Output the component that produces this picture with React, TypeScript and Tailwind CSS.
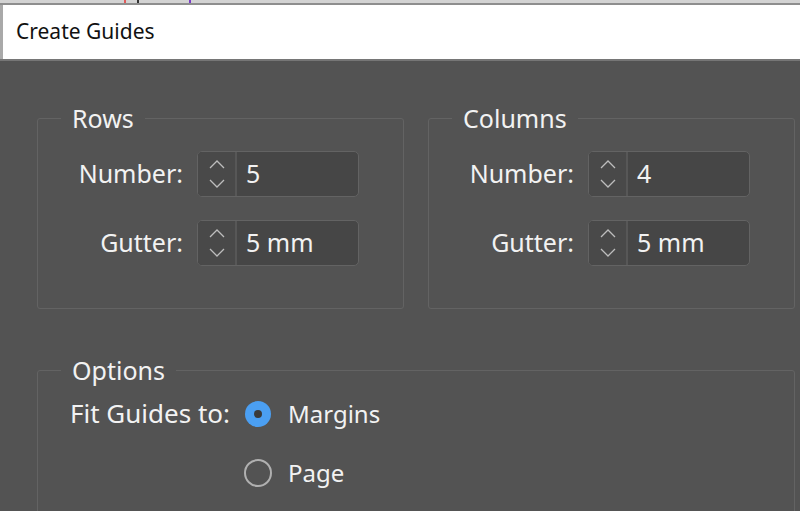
import React from "react";

const font = "font-['Noto_Sans','Open_Sans',sans-serif]";

function Chevrons() {
  return (
    <svg width="18" height="34" viewBox="0 0 18 34" fill="none">
      <path d="M2 11 L9 4 L16 11" stroke="#bdbdbd" strokeWidth="1.3" />
      <path d="M2 23 L9 30 L16 23" stroke="#bdbdbd" strokeWidth="1.3" />
    </svg>
  );
}

function Spinner({ value }: { value: string }) {
  return (
    <div className="flex h-[46px] w-[162px] rounded-[5px] border border-[#636363] bg-[#464646] overflow-hidden">
      <div className="flex w-[39px] items-center justify-center border-r-2 border-[#575757] bg-[#494949]">
        <Chevrons />
      </div>
      <div className="flex flex-1 items-center pl-[9px] text-[25px] text-[#f2f2f2]">{value}</div>
    </div>
  );
}

function Field({ label, value }: { label: string; value: string }) {
  return (
    <div className="flex items-center">
      <div className="w-[122px] text-right text-[25px] text-[#f2f2f2]">{label}</div>
      <div className="ml-[14px]">
        <Spinner value={value} />
      </div>
    </div>
  );
}

function Group({ title, n, g }: { title: string; n: string; g: string }) {
  return (
    <fieldset className="h-[206px] w-[367px] shrink-0 rounded-[3px] border border-[#636363] m-0 p-0 pl-[23px]">
      <legend className="px-[11px] text-[25px] leading-[30px] text-[#f2f2f2]">{title}</legend>
      <div className="mt-[18px] flex flex-col gap-[23px]">
        <Field label="Number:" value={n} />
        <Field label="Gutter:" value={g} />
      </div>
    </fieldset>
  );
}

export default function App() {
  return (
    <div className={`w-[800px] h-[511px] overflow-hidden bg-[#535353] flex flex-col ${font}`}>
      <div className="flex h-[5px] shrink-0 bg-[#d3d3d3] border-b-2 border-[#8e8e8e]">
        <span className="ml-[124px] w-[2px] bg-[#e05a5a]" />
        <span className="ml-[11px] w-[2px] bg-[#333333]" />
        <span className="ml-[50px] w-[2px] bg-[#7a3cc8]" />
      </div>
      <div className="flex h-[54px] shrink-0 items-center bg-white border-l-[3px] border-[#a9a9a9] pl-[13px] text-[21px] text-[#111111]">
        Create Guides
      </div>
      <div className="flex-1 min-h-0 border-t-2 border-[#767676] pt-[42px] pl-[37px]">
        <div className="flex gap-[24px]">
          <Group title="Rows" n="5" g="5 mm" />
          <Group title="Columns" n="4" g="5 mm" />
        </div>
        <fieldset className="mt-[46px] h-[200px] w-[758px] rounded-[3px] border border-[#636363] m-0 p-0 pl-[23px]">
          <legend className="px-[11px] text-[25px] leading-[30px] text-[#f2f2f2]">Options</legend>
          <div className="mt-[9px] flex items-center text-[24px] text-[#f2f2f2]">
            <div className="w-[184px] pl-[9px] text-[26px]">Fit Guides to:</div>
            <div className="flex items-center h-[28px]">
              <span className="flex h-[26px] w-[26px] items-center justify-center rounded-full bg-[#4b9ff2]">
                <span className="h-[8px] w-[8px] rounded-full bg-[#3a3a3a]" />
              </span>
              <span className="ml-[17px]">Margins</span>
            </div>
          </div>
          <div className="mt-[22px] flex items-center text-[24px] text-[#f2f2f2]">
            <div className="w-[183px]" />
            <span className="h-[28px] w-[28px] rounded-full border-2 border-[#b0b0b0]" />
            <span className="ml-[16px]">Page</span>
          </div>
        </fieldset>
      </div>
    </div>
  );
}
